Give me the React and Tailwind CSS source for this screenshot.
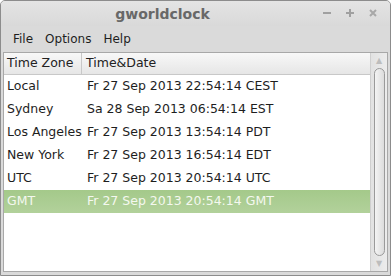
import React from 'react';

const rows = [
  { zone: 'Local', time: 'Fr 27 Sep 2013 22:54:14 CEST' },
  { zone: 'Sydney', time: 'Sa 28 Sep 2013 06:54:14 EST' },
  { zone: 'Los Angeles', time: 'Fr 27 Sep 2013 13:54:14 PDT' },
  { zone: 'New York', time: 'Fr 27 Sep 2013 16:54:14 EDT' },
  { zone: 'UTC', time: 'Fr 27 Sep 2013 20:54:14 UTC' },
  { zone: 'GMT', time: 'Fr 27 Sep 2013 20:54:14 GMT', selected: true },
];

const App = () => {
  return (
    <div className="w-[391px] h-[276px] bg-white font-['DejaVu_Sans',sans-serif]">
      <div className="w-full h-full flex flex-col border border-[#8c8c8c] rounded-t-[5px] bg-[#dadada] overflow-hidden">
        {/* Title bar */}
        <div className="relative h-[25px] flex items-center justify-center pr-[66px] bg-gradient-to-b from-[#e4e4e4] to-[#d9d9d9]">
          <span className="text-[14px] font-bold text-[#686868] mt-[1px]">gworldclock</span>
          <div className="absolute right-[12px] top-[7px] flex items-center gap-[13px]">
            <svg width="10" height="10" viewBox="0 0 10 10"><rect x="1" y="4" width="8" height="2" fill="#a0a0a0" /></svg>
            <svg width="10" height="10" viewBox="0 0 10 10"><rect x="1" y="4" width="8" height="2" fill="#a0a0a0" /><rect x="4" y="1" width="2" height="8" fill="#a0a0a0" /></svg>
            <svg width="10" height="10" viewBox="0 0 10 10"><path d="M2 2 L8 8 M8 2 L2 8" stroke="#a8a8a8" strokeWidth="2" /></svg>
          </div>
        </div>

        {/* Menu bar */}
        <div className="h-[25px] flex items-center text-[12px] text-[#1e1e1e] pl-[12px] gap-[12px]">
          <span>File</span>
          <span>Options</span>
          <span>Help</span>
        </div>

        {/* Tree view */}
        <div className="flex-1 mx-[2px] mb-[3px] mt-[1px] border border-[#a8a8a8] bg-white flex">
          <div className="flex-1 flex flex-col text-[12.5px]">
            <div className="h-[22px] flex bg-gradient-to-b from-[#f8f8f8] to-[#e6e6e6] border-b border-[#c8c8c8] text-[#222]">
              <div className="w-[78px] pl-[3px] flex items-center border-r border-[#c8c8c8]">Time Zone</div>
              <div className="flex-1 pl-[4px] flex items-center">Time&amp;Date</div>
            </div>
            {rows.map((r) => (
              <div
                key={r.zone}
                className={`h-[23px] flex items-center ${
                  r.selected ? 'bg-gradient-to-b from-[#a4c98a] to-[#b2d19b] text-[#f4f8ef]' : 'text-[#1e1e1e]'
                }`}
              >
                <div className="w-[78px] pl-[3px]">{r.zone}</div>
                <div className="flex-1 pl-[5px]">{r.time}</div>
              </div>
            ))}
          </div>

          {/* Scrollbar */}
          <div className="w-[17px] border-l border-[#cfcfcf] bg-gradient-to-r from-[#e2e2e2] to-[#ececec] flex flex-col items-center">
            <div className="h-[15px] flex items-center justify-center text-[#bdbdbd] text-[8px] leading-none">▲</div>
            <div className="flex-1 w-[11px] rounded-full border border-[#9a9a9a] bg-gradient-to-r from-[#f4f4f4] to-[#dcdcdc]" />
            <div className="h-[15px] flex items-center justify-center text-[#bdbdbd] text-[8px] leading-none">▼</div>
          </div>
        </div>
      </div>
    </div>
  );
};

export default App;
